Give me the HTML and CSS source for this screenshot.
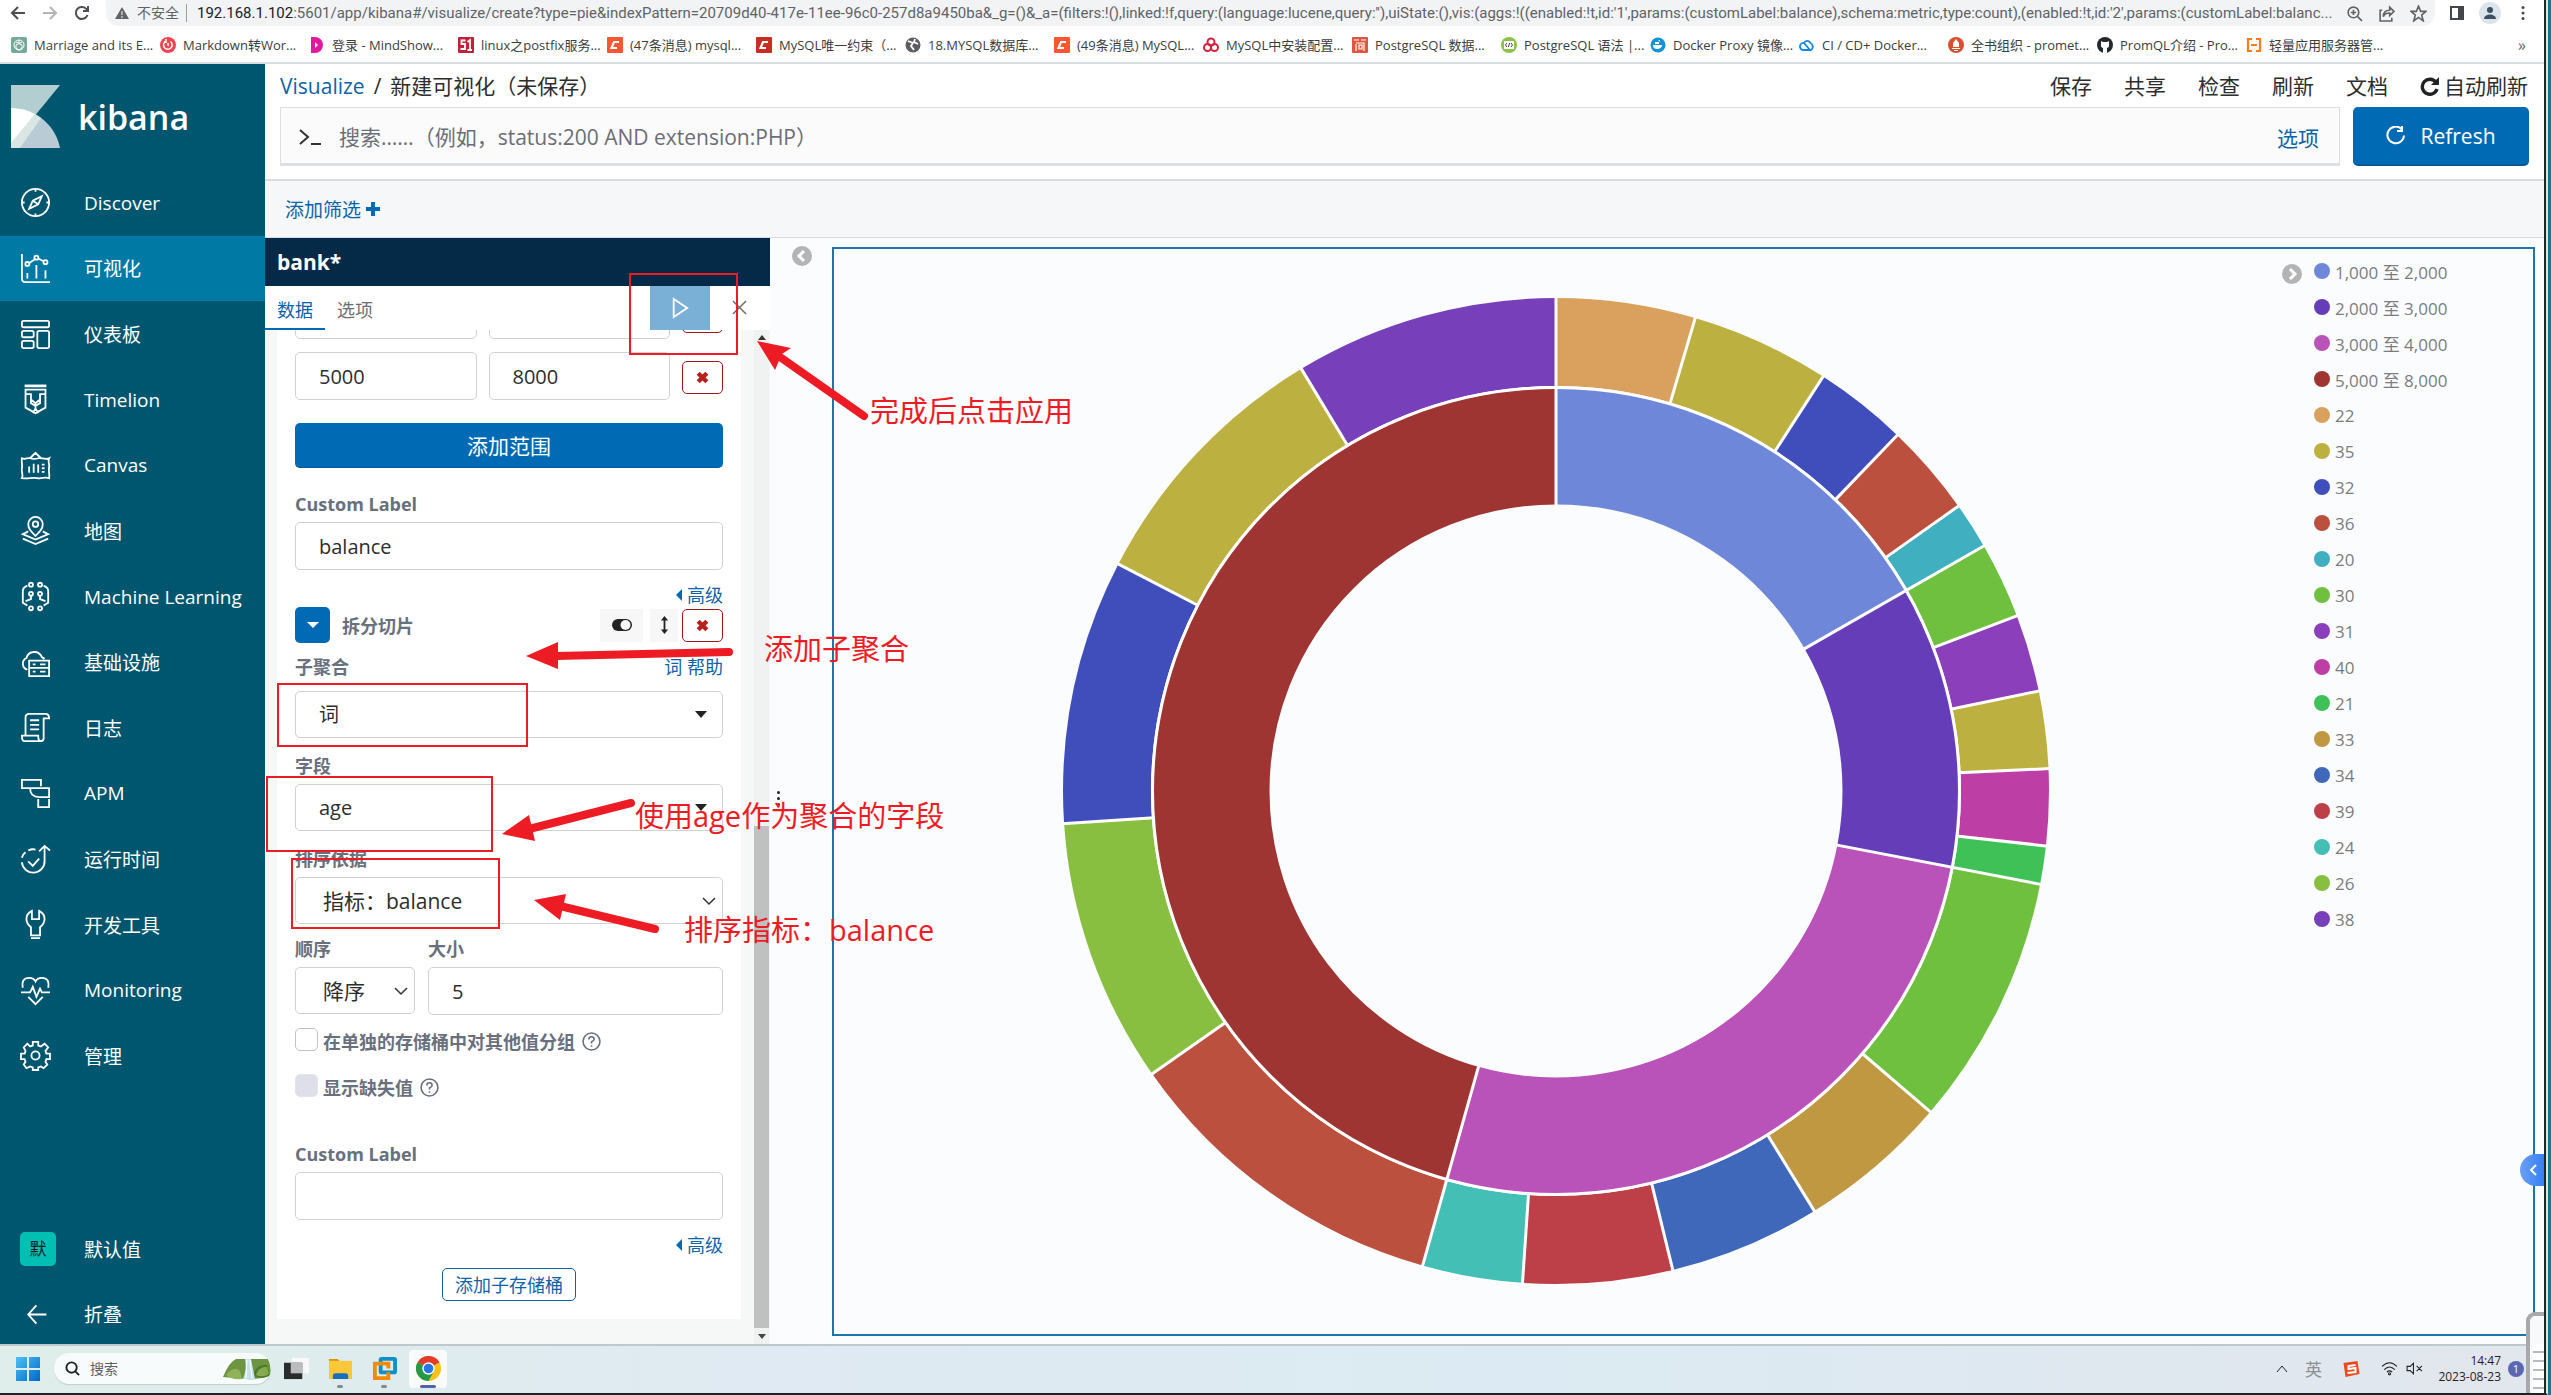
FILE: index.html
```html
<!DOCTYPE html>
<html lang="zh-CN">
<head>
<meta charset="utf-8">
<title>新建可视化 - Kibana</title>
<link rel="stylesheet" href="styles.css">
</head>
<body>
<div class="screen">
<header class="browser">
  <div class="toolbar">
    <button class="tool" aria-label="后退"><svg viewBox="0 0 16 16"><path d="M15 8H2M8 2L2 8l6 6"/></svg></button>
    <button class="tool dim" aria-label="前进"><svg viewBox="0 0 16 16"><path d="M1 8h13M8 2l6 6-6 6"/></svg></button>
    <button class="tool" aria-label="重新加载"><svg viewBox="0 0 16 16"><path d="M13.500 10A6 6 0 1 1 12 3.600l2 2M14 1v5H9"/></svg></button>
    <div class="address">
      <svg class="warn" viewBox="0 0 14 14"><path d="M7 1l7 12H0z" fill="#5f6368"/><path d="M7 5v4M7 10v2" stroke="#fff" stroke-width="1"/></svg>
      <span class="insecure">不安全</span>
      <span class="url"><b>192.168.1.102</b>:5601/app/kibana#/visualize/create?type=pie&amp;indexPattern=20709d40-417e-11ee-96c0-257d8a9450ba&amp;_g=()&amp;_a=(filters:!(),linked:!f,query:(language:lucene,query:''),uiState:(),vis:(aggs:!((enabled:!t,id:'1',params:(customLabel:balance),schema:metric,type:count),(enabled:!t,id:'2',params:(customLabel:balanc...</span>
      <svg class="addr-icon" viewBox="0 0 16 16"><circle cx="7" cy="7" r="5"/><path d="M11 11l4 4M4.500 7h5M7 4.500v5"/></svg>
      <svg class="addr-icon" viewBox="0 0 16 16"><path d="M4 5H2v10h11v-3M5 11c0-5 3-6 6-6V2l4 4-4 4V7.500c-3 0-5 1-6 3.500z"/></svg>
      <svg class="addr-icon" viewBox="0 0 16 16"><path d="M8 1l2 5h5l-4 3.500L12.500 15 8 11.700 3.500 15 5 9.500 1 6h5z"/></svg>
    </div>
    <svg class="win-icon" viewBox="0 0 16 16"><path d="M2 2h12v12H2z" stroke="#44474a" stroke-width="2"/><path d="M9 2h5v12H9z" fill="#44474a"/></svg>
    <span class="avatar"><svg viewBox="0 0 16 16"><circle cx="8" cy="5" r="3" fill="#3c5064"/><path d="M2 14c0-6 12-6 12 0z" fill="#3c5064"/></svg></span>
    <svg class="win-icon kebab" viewBox="0 0 16 16"><circle cx="8" cy="2.500" r="1.500"/><circle cx="8" cy="8" r="1.500"/><circle cx="8" cy="13.500" r="1.500"/></svg>
  </div>
  <nav class="bookmarks">
    <a href="#"><svg viewBox="0 0 16 16"><rect width="16" height="16" rx="2" fill="#75a99c"/><circle cx="8" cy="8" r="5" fill="none" stroke="#fff"/><path d="M5 5l6 3v3M11 5L5 8v3M8 3v4M5 11l3 2 3-2" stroke="#fff"/></svg>Marriage and its E...</a>
    <a href="#"><svg viewBox="0 0 16 16"><circle cx="8" cy="8" r="8" fill="#f5424f"/><path d="M10.500 4.500A4.300 4.300 0 1 1 6 4M6 2v4M8 6v3" stroke="#fff" stroke-width="1.500" fill="none"/></svg>Markdown转Wor...</a>
    <a href="#"><svg viewBox="0 0 16 16"><path d="M2 0h4a8 8 0 0 1 0 16H2zM6 5v6l3-3z" fill="#e5179d" fill-rule="evenodd"/></svg>登录 - MindShow...</a>
    <a href="#"><svg viewBox="0 0 16 16"><rect width="16" height="16" rx="1" fill="#c5203a"/><path d="M7.500 3.500H3.500V7H7v5H2.500M12 13V3L9.500 5M9.500 13H14" stroke="#fff" stroke-width="1.800" fill="none"/></svg>linux之postfix服务...</a>
    <a href="#"><svg viewBox="0 0 16 16"><rect width="16" height="16" rx="1" fill="#fc5531"/><path d="M12 5H7L4.500 11H10" stroke="#fff" stroke-width="2.200" fill="none"/></svg>(47条消息) mysql...</a>
    <a href="#"><svg viewBox="0 0 16 16"><rect width="16" height="16" rx="1" fill="#ca2c24"/><path d="M12 5H7L4.500 11H10" stroke="#fff" stroke-width="2.200" fill="none"/></svg>MySQL唯一约束（...</a>
    <a href="#"><svg viewBox="0 0 16 16"><circle cx="8" cy="8" r="7.500" fill="#5b5f63"/><path d="M3 4l5 2-2 3 3 4M10 2l-1 3 4 2" stroke="#fff" stroke-width="1.800" fill="none"/></svg>18.MYSQL数据库...</a>
    <a href="#"><svg viewBox="0 0 16 16"><rect width="16" height="16" rx="1" fill="#fc5531"/><path d="M12 5H7L4.500 11H10" stroke="#fff" stroke-width="2.200" fill="none"/></svg>(49条消息) MySQL...</a>
    <a href="#"><svg viewBox="0 0 16 16" fill="none" stroke="#d8203c" stroke-width="2"><circle cx="8" cy="5" r="3.500"/><circle cx="4.500" cy="10.500" r="3.500"/><circle cx="11.500" cy="10.500" r="3.500"/></svg>MySQL中安装配置...</a>
    <a href="#"><svg viewBox="0 0 16 16"><rect width="16" height="16" rx="1" fill="#dd5640"/><path d="M2 3h5M9 3h5M4 7v7M4 6h8v8M7 8h3v4H7z" stroke="#fff" stroke-width="1.200" fill="none"/></svg>PostgreSQL 数据...</a>
    <a href="#"><svg viewBox="0 0 16 16"><circle cx="8" cy="8" r="8" fill="#8bc34a"/><rect x="3" y="4" width="10" height="8" fill="#fff"/><path d="M6 6L4.500 8 6 10M10 6l1.500 2L10 10M8.700 6l-1.400 4" stroke="#444" fill="none"/></svg>PostgreSQL 语法 |...</a>
    <a href="#"><svg viewBox="0 0 16 16"><circle cx="8" cy="8" r="7.500" fill="#1792d6"/><path d="M3 8h9c0 3-3 4-5 4S3 11 3 8M5 5h4v2H5zM8 3h2v2" fill="#fff"/></svg>Docker Proxy 镜像...</a>
    <a href="#"><svg viewBox="0 0 16 16"><path d="M5 6a3.500 3.500 0 0 1 6.500 0A4 4 0 0 1 12 13H4A3.500 3.500 0 0 1 5 6l6 7" stroke="#1685e8" stroke-width="1.800" fill="none"/></svg>CI / CD+ Docker...</a>
    <a href="#"><svg viewBox="0 0 16 16"><circle cx="8" cy="8" r="8" fill="#da4e31"/><path d="M8 2l3 4v4H5V6zM4 11h8v1H4zM6 13h4v1H6z" fill="#fff"/></svg>全书组织 - promet...</a>
    <a href="#"><svg viewBox="0 0 16 16"><circle cx="8" cy="8" r="8" fill="#24292e"/><path d="M4 4l2 1h4l2-1v5c0 3-8 3-8 0zM6 11h4v5H6z" fill="#fff"/></svg>PromQL介绍 - Pro...</a>
    <a href="#"><svg viewBox="0 0 16 16"><path d="M6 2H2v12h4M10 2h4v12h-4M5 8h6" stroke="#ff7a1a" stroke-width="2.200" fill="none"/></svg>轻量应用服务器管...</a>
    <button class="more" aria-label="更多书签">»</button>
  </nav>
</header>

<div class="app">
  <aside class="sidebar">
    <a class="brand" href="#">
      <svg viewBox="0 0 49 63"><path d="M0 0h49L0 60z" fill="#b3ced1"/><path d="M0 23c9 0 17 2 24 6L0 60z" fill="#fff"/><path d="M24 29c13 7 22 19 25 34H0v-2z" fill="#b9ccd6"/><path d="M24 29l6 4L9 63H0v-5z" fill="#d9e6e4"/></svg>
      <span>kibana</span>
    </a>
    <ul class="menu">
      <li><a href="#"><svg viewBox="0 0 32 32"><circle cx="16" cy="16" r="15"/><path d="M16 1v3M16 28v3M1 16h3M28 16h3M23 9l-4 9-10 5 4-9zM13 14l6 4"/></svg>Discover</a></li>
      <li><a class="active" href="#"><svg viewBox="0 0 32 32"><path d="M1 0v27q0 4 4 4h27M7 27v-6M17 27V12M27 27v-9M9 10l6-4M19 5l6 3"/><circle cx="7" cy="11" r="2.200"/><circle cx="17" cy="4" r="2.200"/><circle cx="27" cy="9" r="2.200"/></svg>可视化</a></li>
      <li><a href="#"><svg viewBox="0 0 32 32"><rect x="1" y="1" width="30" height="7" rx="2"/><rect x="1" y="12" width="13" height="7" rx="2"/><rect x="1" y="23" width="13" height="8" rx="2"/><rect x="18" y="12" width="13" height="19" rx="2"/></svg>仪表板</a></li>
      <li><a href="#"><svg viewBox="0 0 32 32"><path d="M4 1h24" stroke-width="3"/><path d="M5 5h22v20l-11 6-11-6zM5 10h6v6l5 4 5-4v-6h6M11 16v4l5 3 5-3v-4M13 31l3-5 3 5M16 20v5"/></svg>Timelion</a></li>
      <li><a href="#"><svg viewBox="0 0 32 32"><path d="M10 8l6-6 6 6M1 8c4 2 6-1 9 0s6 1 9 0 8 2 12 0c-2 4 1 6 0 10s1 8 0 12c-5-2-8 1-13 0s-11 1-17 0c2-4-1-7 0-11s-1-7 0-11zM9 24v-7M14 24V14M19 24v-9M23 15h3M23 19h3M23 23h3"/></svg>Canvas</a></li>
      <li><a href="#"><svg viewBox="0 0 32 32"><path d="M16 22c-5-5-8-8-8-13a8 8 0 0 1 16 0c0 5-3 8-8 13zM8 17l-6 3 14 6 14-6-6-3M2 25l14 6 14-6"/><circle cx="16" cy="9" r="3"/></svg>地图</a></li>
      <li><a href="#"><svg viewBox="0 0 32 32"><circle cx="11" cy="3" r="2.200"/><circle cx="21" cy="3" r="2.200"/><circle cx="11" cy="13" r="2.200"/><circle cx="21" cy="13" r="2.200"/><circle cx="11" cy="29" r="2.200"/><circle cx="21" cy="29" r="2.200"/><path d="M7 4q-5 2-5 6v13l5 3M25 4q5 2 5 6v13l-5 3M11 15v4l-6 2M21 15v4l6 2"/></svg>Machine Learning</a></li>
      <li><a href="#"><svg viewBox="0 0 32 32"><path d="M7 24a7 7 0 0 1-1-13 9 9 0 0 1 17-1l3 2M9 14h22v17H9zM9 22h22M13 18h3M13 26h3M21 18h6M21 26h6"/></svg>基础设施</a></li>
      <li><a href="#"><svg viewBox="0 0 32 32"><path d="M5 24V5q0-4 4-4h18M27 1q4 0 4 5h-6V28q0 3-4 3H4q-3 0-3-6h18q0 6 3 6M10 8h10M10 13h10M10 18h10"/></svg>日志</a></li>
      <li><a href="#"><svg viewBox="0 0 32 32"><path d="M22 8V1H1v9h10M10 10h21v10H20q-10 0-10-10M19 22v9h12v-9"/></svg>APM</a></li>
      <li><a href="#"><svg viewBox="0 0 32 32"><path d="M20 7l6-6 6 5M26 2v15a12.500 12.500 0 0 1-25 2M1 14q1-4 4-6M8 6q4-2 8-1M8 18l5 5 7-8"/></svg>运行时间</a></li>
      <li><a href="#"><svg viewBox="0 0 32 32"><path d="M12 1v9h8V1q6 3 6 9 0 5-5 9v9H11v-9q-5-4-5-9 0-6 6-9zM11 31h10"/></svg>开发工具</a></li>
      <li><a href="#"><svg viewBox="0 0 32 32"><path d="M2 13Q0 2 9 2q5 0 7 4 2-4 7-4 9 0 7 11M0 18h10l3-6 4 11 4-9 2 4h9M8 23l8 8 8-8"/></svg>Monitoring</a></li>
      <li><a href="#"><svg viewBox="0 0 32 32"><path d="M13 1h6v4l3 1 4-3 4 4-3 4 1 3h4v6h-4l-1 3 2 3-4 4-3-2-3 1v3h-6v-3l-3-1-4 2-3-4 2-3-1-3H0v-6h4l1-3-2-4 4-4 3 3 3-1z"/><circle cx="16" cy="16" r="4.500"/></svg>管理</a></li>
    </ul>
    <ul class="menu foot">
      <li><a href="#"><span class="space">默</span>默认值</a></li>
      <li><a href="#"><svg class="fold" viewBox="0 0 32 32"><path d="M28 16H8M17 6L8 16l9 10"/></svg>折叠</a></li>
    </ul>
  </aside>

  <main class="main">
    <div class="topbar">
      <div class="crumbs"><a href="#">Visualize</a><span>/</span><strong>新建可视化（未保存）</strong></div>
      <div class="actions">
        <button>保存</button><button>共享</button><button>检查</button><button>刷新</button><button>文档</button>
        <button class="auto"><svg viewBox="0 0 20 20"><path d="M16 6.500A7.500 7.500 0 1 0 17 13" fill="none" stroke="#222" stroke-width="3.400"/><path d="M19 1v8h-8z" fill="#222"/></svg>自动刷新</button>
      </div>
    </div>
    <div class="query">
      <div class="searchbox">
        <svg viewBox="0 0 24 24"><path d="M2 5l8 7-8 7M13 19h10"/></svg>
        <input type="text" aria-label="搜索" placeholder="搜索……（例如，status:200 AND extension:PHP）">
        <a href="#">选项</a>
      </div>
      <button class="refresh"><svg viewBox="0 0 20 20"><path d="M16 3.500a8.300 8.300 0 1 0 2 6M16 0v5h-5"/></svg>Refresh</button>
    </div>
    <div class="filters"><a href="#">添加筛选<svg viewBox="0 0 16 16"><path d="M8 1v14M1 8h14"/></svg></a></div>

    <div class="work">
      <section class="editor">
        <h2>bank*</h2>
        <div class="tabs">
          <button class="tab on">数据</button><button class="tab">选项</button>
          <button class="apply" aria-label="应用更改"><svg viewBox="0 0 20 24"><path d="M3 2v20L18 12z"/></svg></button>
          <button class="discard" aria-label="放弃更改"><svg viewBox="0 0 16 16"><path d="M1 1l14 14M15 1L1 15"/></svg></button>
        </div>
        <div class="scroller">
          <form class="panel">
            <div class="range scrolled"><input type="text" aria-label="自"><input type="text" aria-label="到"><button type="button" class="del" aria-label="删除范围"></button></div>
            <div class="range"><input type="text" aria-label="自" value="5000"><input type="text" aria-label="到" value="8000"><button type="button" class="del" aria-label="删除范围"><svg viewBox="0 0 12 12"><path d="M2 2l8 8M10 2l-8 8"/></svg></button></div>
            <button type="button" class="primary">添加范围</button>
            <label class="lbl top" for="cl1">Custom Label</label>
            <input type="text" id="cl1" value="balance">
            <a class="adv" href="#"><i></i>高级</a>
            <div class="bucket">
              <button type="button" class="fold-btn" aria-label="折叠存储桶"><i></i></button>
              <span>拆分切片</span>
              <button type="button" class="grey wide" aria-label="禁用"><svg viewBox="0 0 22 14"><rect x="1" y="1" width="20" height="12" rx="6" fill="#222"/><circle cx="14.500" cy="7" r="5" fill="#f7f7f7"/></svg></button>
              <button type="button" class="grey" aria-label="拖动"><svg viewBox="0 0 10 20"><path d="M5 3v14" stroke="#222" stroke-width="2"/><path d="M1 5l4-5 4 5zM1 15l4 5 4-5z" fill="#222"/></svg></button>
              <button type="button" class="del" aria-label="删除"><svg viewBox="0 0 12 12"><path d="M2 2l8 8M10 2l-8 8"/></svg></button>
            </div>
            <div class="lbl-row"><label class="lbl" for="agg">子聚合</label><a href="#">词 帮助</a></div>
            <div class="pick solid"><select id="agg"><option>词</option></select></div>
            <label class="lbl mid" for="field">字段</label>
            <div class="pick solid"><select id="field"><option>age</option></select></div>
            <label class="lbl mid" for="by">排序依据</label>
            <div class="pick"><select id="by"><option>指标：balance</option></select><svg viewBox="0 0 14 10"><path d="M1 2l6 6 6-6"/></svg></div>
            <div class="pair">
              <div><label class="lbl" for="ord">顺序</label><div class="pick"><select id="ord"><option>降序</option></select><svg viewBox="0 0 14 10"><path d="M1 2l6 6 6-6"/></svg></div></div>
              <div><label class="lbl" for="size">大小</label><input type="text" id="size" value="5"></div>
            </div>
            <div class="check"><input type="checkbox" id="other"><label for="other">在单独的存储桶中对其他值分组</label><svg viewBox="0 0 18 18"><circle cx="9" cy="9" r="8"/><path d="M6.500 7q0-2.500 2.500-2.500T11.500 7Q11.500 8 9 9.500V11M9 12.500V14"/></svg></div>
            <div class="check"><input type="checkbox" id="missing" disabled><label for="missing">显示缺失值</label><svg viewBox="0 0 18 18"><circle cx="9" cy="9" r="8"/><path d="M6.500 7q0-2.500 2.500-2.500T11.500 7Q11.500 8 9 9.500V11M9 12.500V14"/></svg></div>
            <label class="lbl last" for="cl2">Custom Label</label>
            <input type="text" id="cl2">
            <a class="adv" href="#"><i></i>高级</a>
            <button type="button" class="outline">添加子存储桶</button>
          </form>
          <div class="track" aria-hidden="true"><i class="up"></i><div class="thumb"></div><i class="down"></i></div>
        </div>
      </section>
      <div class="gutter">
        <button class="collapse" aria-label="折叠编辑器"><svg viewBox="0 0 20 20"><circle cx="10" cy="10" r="10"/><path d="M12 5l-5 5 5 5"/></svg></button>
        <span class="grip"><i></i><i></i><i></i></span>
      </div>
      <section class="vis">
        <svg class="pie" viewBox="-495 -495 990 990" role="img" aria-label="环形图">
          <g class="ring outer" transform="rotate(-90)">
            <circle r="449" pathLength="360" stroke="#daa05d" stroke-dasharray="16.400 360"/>
            <circle r="449" pathLength="360" stroke="#bcb041" stroke-dasharray="16.400 360" stroke-dashoffset="-16.400"/>
            <circle r="449" pathLength="360" stroke="#3f4ebb" stroke-dasharray="11 360" stroke-dashoffset="-32.800"/>
            <circle r="449" pathLength="360" stroke="#bc503f" stroke-dasharray="10.900 360" stroke-dashoffset="-43.800"/>
            <circle r="449" pathLength="360" stroke="#40afbf" stroke-dasharray="5.500 360" stroke-dashoffset="-54.700"/>
            <circle r="449" pathLength="360" stroke="#70c040" stroke-dasharray="9 360" stroke-dashoffset="-60.200"/>
            <circle r="449" pathLength="360" stroke="#8c3fba" stroke-dasharray="9.100 360" stroke-dashoffset="-69.200"/>
            <circle r="449" pathLength="360" stroke="#bcb041" stroke-dasharray="9.100 360" stroke-dashoffset="-78.300"/>
            <circle r="449" pathLength="360" stroke="#bd3fa5" stroke-dasharray="9 360" stroke-dashoffset="-87.400"/>
            <circle r="449" pathLength="360" stroke="#40c158" stroke-dasharray="4.500 360" stroke-dashoffset="-96.400"/>
            <circle r="449" pathLength="360" stroke="#70c040" stroke-dasharray="29.700 360" stroke-dashoffset="-100.900"/>
            <circle r="449" pathLength="360" stroke="#bf9841" stroke-dasharray="17.800 360" stroke-dashoffset="-130.600"/>
            <circle r="449" pathLength="360" stroke="#3f68bb" stroke-dasharray="17.900 360" stroke-dashoffset="-148.400"/>
            <circle r="449" pathLength="360" stroke="#bd3f47" stroke-dasharray="17.600 360" stroke-dashoffset="-166.300"/>
            <circle r="449" pathLength="360" stroke="#43bfb6" stroke-dasharray="11.800 360" stroke-dashoffset="-183.900"/>
            <circle r="449" pathLength="360" stroke="#bc503f" stroke-dasharray="39.300 360" stroke-dashoffset="-195.700"/>
            <circle r="449" pathLength="360" stroke="#89bf40" stroke-dasharray="31.200 360" stroke-dashoffset="-235"/>
            <circle r="449" pathLength="360" stroke="#3f4ebb" stroke-dasharray="31.200 360" stroke-dashoffset="-266.200"/>
            <circle r="449" pathLength="360" stroke="#bcb041" stroke-dasharray="31.500 360" stroke-dashoffset="-297.400"/>
            <circle r="449" pathLength="360" stroke="#7740ba" stroke-dasharray="31.100 360" stroke-dashoffset="-328.900"/>
          </g>
          <g class="ring inner" transform="rotate(-90)">
            <circle r="345" pathLength="360" stroke="#6f87d8" stroke-dasharray="60.200 360"/>
            <circle r="345" pathLength="360" stroke="#663db8" stroke-dasharray="40.700 360" stroke-dashoffset="-60.200"/>
            <circle r="345" pathLength="360" stroke="#b952b9" stroke-dasharray="94.800 360" stroke-dashoffset="-100.900"/>
            <circle r="345" pathLength="360" stroke="#9e3533" stroke-dasharray="164.300 360" stroke-dashoffset="-195.700"/>
          </g>
          <g class="cuts">
            <circle r="403.500"/>
            <path d="M0-285V-495"/>
            <path d="M0-403V-495" transform="rotate(16.400)"/><path d="M0-403V-495" transform="rotate(32.800)"/>
            <path d="M0-403V-495" transform="rotate(43.800)"/><path d="M0-403V-495" transform="rotate(54.700)"/>
            <path d="M0-285V-495" transform="rotate(60.200)"/><path d="M0-403V-495" transform="rotate(69.200)"/>
            <path d="M0-403V-495" transform="rotate(78.300)"/><path d="M0-403V-495" transform="rotate(87.400)"/>
            <path d="M0-403V-495" transform="rotate(96.400)"/><path d="M0-285V-495" transform="rotate(100.900)"/>
            <path d="M0-403V-495" transform="rotate(130.600)"/><path d="M0-403V-495" transform="rotate(148.400)"/>
            <path d="M0-403V-495" transform="rotate(166.300)"/><path d="M0-403V-495" transform="rotate(183.900)"/>
            <path d="M0-285V-495" transform="rotate(195.700)"/><path d="M0-403V-495" transform="rotate(235)"/>
            <path d="M0-403V-495" transform="rotate(266.200)"/><path d="M0-403V-495" transform="rotate(297.400)"/>
            <path d="M0-403V-495" transform="rotate(328.900)"/>
          </g>
        </svg>
        <div class="legend">
          <button class="collapse" aria-label="切换图例"><svg viewBox="0 0 20 20"><circle cx="10" cy="10" r="10"/><path d="M8 5l5 5-5 5"/></svg></button>
          <ul>
            <li><i style="background:#6f87d8"></i>1,000 至 2,000</li>
            <li><i style="background:#663db8"></i>2,000 至 3,000</li>
            <li><i style="background:#b952b9"></i>3,000 至 4,000</li>
            <li><i style="background:#9e3533"></i>5,000 至 8,000</li>
            <li><i style="background:#daa05d"></i>22</li>
            <li><i style="background:#bcb041"></i>35</li>
            <li><i style="background:#3f4ebb"></i>32</li>
            <li><i style="background:#bc503f"></i>36</li>
            <li><i style="background:#40afbf"></i>20</li>
            <li><i style="background:#70c040"></i>30</li>
            <li><i style="background:#8c3fba"></i>31</li>
            <li><i style="background:#bd3fa5"></i>40</li>
            <li><i style="background:#40c158"></i>21</li>
            <li><i style="background:#bf9841"></i>33</li>
            <li><i style="background:#3f68bb"></i>34</li>
            <li><i style="background:#bd3f47"></i>39</li>
            <li><i style="background:#43bfb6"></i>24</li>
            <li><i style="background:#89bf40"></i>26</li>
            <li><i style="background:#7740ba"></i>38</li>
          </ul>
        </div>
      </section>
    </div>
  </main>
</div>

<footer class="taskbar">
  <button class="start" aria-label="开始"><svg viewBox="0 0 24 24"><defs><linearGradient id="w" x2="1" y2="1"><stop stop-color="#4cc2f5"/><stop offset="1" stop-color="#0067c7"/></linearGradient></defs><path d="M0 0h11v11H0zM13 0h11v11H13zM0 13h11v11H0zM13 13h11v11H13z" fill="url(#w)"/></svg></button>
  <label class="find"><svg viewBox="0 0 16 16"><circle cx="7" cy="7" r="5.500"/><path d="M11 11l4 4"/></svg><input type="text" placeholder="搜索" aria-label="搜索">
    <svg class="falls" viewBox="0 0 48 22"><path d="M0 19Q6 4 13 1h32q4 8 2 17-12 4-24 3T0 19z" fill="#6d9440"/><path d="M3 17q8-10 14-4l2 8Q8 22 3 17z" fill="#8fb35a"/><path d="M30 18q2-12 14-11l3 10q-6 5-17 1z" fill="#4d7a2c"/><path d="M33 17q3-9 11-8l2 7q-6 4-13 1z" fill="#86ab4e"/><path d="M22 1h6l4 20H20q4-10 2-20z" fill="#c5e2ee"/><path d="M24 2l-1 18M27 2l2 18" stroke="#fff"/></svg></label>
  <button class="task" aria-label="任务视图"><svg viewBox="0 0 26 26"><rect x="8" y="2" width="18" height="16" fill="#f7f9f9"/><rect x="0" y="7" width="19" height="17" fill="#2b2c2d"/><rect x="7" y="7" width="12" height="11" fill="#b9bdbd"/></svg></button>
  <button class="task open" aria-label="文件资源管理器"><svg viewBox="0 0 26 26"><path d="M1 3h9l3 3H1z" fill="#d9950c"/><path d="M1 5h24v19H1z" fill="#fcc73d"/><path d="M5 24v-3q0-3 3-3h10q3 0 3 3v3z" fill="#1470bd"/></svg></button>
  <button class="task open" aria-label="虚拟机"><svg viewBox="0 0 26 26" stroke-width="4"><rect x="9" y="3" width="15" height="14" rx="1" stroke="#0f90c9"/><path d="M9 8H3v15h14v-6M9 8h8v5" stroke="#ef8c0b"/></svg></button>
  <button class="task current" aria-label="Chrome"><svg viewBox="0 0 24 24"><circle cx="12" cy="12" r="12" fill="#fbc116"/><path d="M12 12L1.600 6A12 12 0 0 1 22.400 6z" fill="#e33b2e"/><path d="M1.600 6A12 12 0 0 0 12 24l5-9-5-3z" fill="#249a48"/><path d="M12 6h10.400l-2-2H9z" fill="#e33b2e"/><circle cx="12" cy="12" r="6" fill="#fff"/><circle cx="12" cy="12" r="4.600" fill="#2a75e6"/></svg></button>
  <div class="tray">
    <svg class="t1" viewBox="0 0 12 12"><path d="M1 9l5-6 5 6"/></svg>
    <span class="ime">英</span>
    <svg class="t2" viewBox="0 0 16 16"><path d="M0 2l14-2 2 13-14 3z" fill="#ea4a1f"/><path d="M12 4L5 5v3l7-1v4l-8 1" stroke="#fff" stroke-width="2" fill="none"/></svg>
    <svg class="t3" viewBox="0 0 16 16"><path d="M1 6q7-7 14 0M3 9q5-5 10 0M5.500 11.500q2.500-2.500 5 0"/><circle cx="8" cy="13" r="1"/></svg>
    <svg class="t3" viewBox="0 0 16 16"><path d="M1 6v4h3l3 3V3L4 6zM10 5.500l5 5M15 5.500l-5 5"/></svg>
    <div class="clock"><span>14:47</span><span>2023-08-23</span></div>
    <span class="count">1</span>
  </div>
</footer>

<button class="side-tab" aria-label="展开"><svg viewBox="0 0 12 16"><path d="M8 3L3 8l5 5"/></svg></button>
<div class="dock"></div>

<div class="notes">
  <svg>
    <g class="boxes">
      <rect x="630" y="274" width="107" height="80"/><rect x="278" y="684" width="249" height="62"/>
      <rect x="267" y="777" width="225" height="74"/><rect x="292" y="859" width="207" height="69"/>
    </g>
    <g class="heads"><path d="M757 341l34 7-9 6-7 16z"/><path d="M526 656l32-14v27z"/><path d="M502 834l27-19 6 26z"/><path d="M534 900l32-6-6 26z"/></g>
    <g class="shafts"><path d="M780 357L864 416"/><path d="M556 656L729 652"/><path d="M529 829L631 803"/><path d="M560 906L655 929"/></g>
  </svg>
  <p class="n1">完成后点击应用</p>
  <p class="n2">添加子聚合</p>
  <p class="n3">使用age作为聚合的字段</p>
  <p class="n4">排序指标：balance</p>
</div>
</div>
</body>
</html>
```
FILE: styles.css
```css
* { box-sizing: border-box; }
body {
  margin: 0;
  font-family: "Open Sans", "Noto Sans CJK SC", sans-serif;
  font-size: 18px;
  color: #2d2d2d;
  background: #027f96;
}
button, input, select { font: inherit; color: inherit; margin: 0; }
button { border: 0; background: none; padding: 0; cursor: pointer; }
a { color: #0f62a6; text-decoration: none; }
ul { list-style: none; margin: 0; padding: 0; }
p, h2 { margin: 0; }
svg { flex: none; fill: none; }

.screen {
  position: relative;
  display: flex;
  flex-direction: column;
  min-height: 100vh;
  margin-right: 3px;
  background: #fff;
  border-right: 2px solid #e4e4e4;
  border-bottom: 2px solid #1c2326;
}
.screen::after {
  content: "";
  position: absolute;
  top: 0;
  right: 0;
  bottom: 0;
  width: 2px;
  background: #22272a;
}

/* browser chrome */
.browser { height: 64px; border-bottom: 2px solid #d9dcde; background: #fff; }
.toolbar { display: flex; align-items: center; height: 26px; padding: 0 15px 0 10px; }
.tool { width: 16px; height: 16px; margin-right: 16px; }
.tool svg { display: block; width: 16px; height: 16px; stroke: #4a4d51; stroke-width: 2; }
.tool.dim svg { stroke: #b3b5b8; }
.address {
  flex: 1;
  display: flex;
  align-items: center;
  height: 26px;
  min-width: 0;
  margin-right: 14px;
  padding: 0 8px 0 9px;
  background: #f1f3f4;
  border-radius: 0 0 13px 13px;
  color: #5f6368;
}
.warn { width: 14px; height: 14px; }
.insecure { flex: none; margin-left: 8px; padding-right: 7px; border-right: 1px solid #9aa0a6; font-size: 14px; line-height: 18px; }
.url { flex: 1; min-width: 0; margin-left: 10px; white-space: nowrap; font-family: Roboto, sans-serif; font-size: 15px; }
.url b { font-weight: 400; color: #202124; }
.addr-icon { width: 17px; height: 17px; margin-left: 15px; stroke: #5f6368; stroke-width: 1.500; }
.url + .addr-icon { margin-left: 0; }
.win-icon { width: 16px; height: 16px; }
.kebab { fill: #44474a; }
.avatar { display: flex; align-items: center; justify-content: center; width: 22px; height: 22px; margin: 0 14px; border-radius: 50%; background: #dde3ea; }
.avatar svg { width: 16px; height: 16px; }
.bookmarks { display: flex; align-items: center; height: 37px; padding: 0 20px 0 11px; }
.bookmarks a { display: flex; align-items: center; width: 149px; color: #3a3d40; font-size: 13px; white-space: nowrap; }
.bookmarks svg { width: 16px; height: 16px; margin-right: 7px; }
.more { margin-left: auto; font-size: 16px; color: #5f6368; }

/* kibana navigation */
.app { flex: 1; display: flex; }
.sidebar { display: flex; flex-direction: column; width: 265px; background: #01566f; }
.brand { display: flex; align-items: center; gap: 18px; height: 106px; padding: 0 0 1px 11px; color: #fff; }
.brand svg { width: 49px; height: 63px; }
.brand span { font-size: 34px; font-weight: 600; line-height: 50px; }
.menu { flex: 14; display: flex; flex-direction: column; }
.menu.foot { flex: 2; margin: 127px 0 -3px; }
.menu li { flex: 1; display: flex; }
.menu a { flex: 1; display: flex; align-items: center; gap: 33px; padding-left: 20px; color: #fff; font-size: 19px; }
.menu svg { width: 31px; height: 31px; padding: 1px; overflow: visible; stroke: #fff; stroke-width: 2; }
.menu .active { background: #0079a5; }
.space { width: 36px; height: 34px; margin-right: -5px; border-radius: 5px; background: #01bfb3; color: #10202a; font-size: 17px; line-height: 34px; text-align: center; }

/* top of the page */
.main { flex: 1; display: flex; flex-direction: column; min-width: 0; margin-right: 2px; background: #fff; }
.topbar { display: flex; justify-content: space-between; height: 43px; padding: 0 16px 0 15px; font-size: 21px; line-height: 44px; }
.crumbs { display: flex; gap: 9px; }
.crumbs strong { font-weight: 400; }
.actions { display: flex; gap: 32px; }
.auto { display: flex; align-items: center; gap: 4px; }
.auto svg { width: 20px; height: 20px; }
.query { display: flex; gap: 13px; height: 72px; padding: 0 15px 13px; }
.searchbox { flex: 1; display: flex; align-items: center; padding: 2px 20px 0 17px; background: #fbfbfb; border: 1px solid #dcdfe1; border-bottom: 3px solid #dde0e2; font-size: 21px; }
.searchbox svg { width: 24px; height: 24px; margin-right: 17px; stroke: #333; stroke-width: 2; }
.searchbox input { flex: 1; min-width: 0; padding: 0; border: 0; background: none; }
.searchbox input::placeholder { color: #6a6e76; }
.refresh { display: flex; align-items: center; justify-content: center; gap: 14px; width: 176px; border-radius: 5px; background: #006bb4; border-bottom: 2px solid #03599a; color: #fff; font-size: 21px; }
.refresh svg { width: 20px; height: 20px; stroke: #fff; stroke-width: 2; }
.filters { display: flex; align-items: center; height: 59px; padding-left: 20px; background: #f5f7f9; border-top: 2px solid #d9dcdf; border-bottom: 1px solid #d9dcdf; font-size: 19px; }
.filters a { display: flex; align-items: center; gap: 4px; }
.filters svg { width: 16px; height: 16px; stroke: #006bb4; stroke-width: 4; }

/* editor */
.work { flex: 1; display: flex; background: #fbfcfe; }
.editor { display: flex; flex-direction: column; width: 505px; }
.editor h2 { height: 48px; padding-left: 12px; background: #042a48; color: #fff; font-size: 21px; font-weight: 700; line-height: 48px; }
.tabs { display: flex; height: 44px; background: #fff; }
.tab { padding: 4px 12px 0; border-bottom: 2px solid transparent; color: #6a6e76; }
.tab.on { color: #0a62ab; border-color: #006bb4; }
.apply { width: 60px; margin-left: auto; background: #7ab0d6; }
.apply svg { display: block; width: 18px; height: 22px; margin: auto; stroke: #fff; stroke-width: 2; }
.discard { width: 60px; padding-left: 22px; text-align: left; }
.discard svg { width: 15px; height: 15px; stroke: #66686b; stroke-width: 1.500; }
.scroller { flex: 1; display: flex; align-items: flex-start; overflow: hidden; padding-left: 12px; background: #f6f7f7; }
.panel { display: flex; flex-direction: column; width: 464px; padding: 0 18px 18px; background: #fff; }
.panel input[type="text"] { width: 100%; height: 48px; padding: 0 23px; border: 1px solid #cfd1d3; border-radius: 5px; background: #fff; font-size: 20px; }
.range { display: flex; align-items: center; gap: 12px; margin-top: 13px; }
.range.scrolled { margin-top: -39px; }
.range .del { margin-top: 2px; }
.del { flex: none; width: 41px; height: 33px; border: 1px solid #a5161a; border-radius: 5px; background: #fff; }
.del svg { width: 13px; height: 13px; stroke: #b5211b; stroke-width: 4; }
.primary { height: 45px; margin-top: 23px; border-radius: 5px; background: #006bb4; border-bottom: 1px solid #03599a; color: #fff; font-size: 21px; }
.lbl { display: block; color: #69707d; font-size: 18px; font-weight: 700; line-height: 24px; }
.lbl.top { margin: 24px 0 6px; }
.lbl.mid { margin: 16px 0 6px; }
.lbl.last { margin: 40px 0 6px; }
.adv { align-self: flex-end; display: flex; align-items: center; gap: 5px; margin-top: 13px; line-height: 24px; }
.adv i { border: 6px solid transparent; border-left: 0; border-right-color: #006bb4; }
.bucket { display: flex; align-items: center; gap: 4px; height: 36px; color: #69707d; font-weight: 700; }
.bucket span { flex: 1; padding-left: 8px; }
.fold-btn { display: flex; align-items: center; justify-content: center; width: 35px; height: 36px; border-radius: 5px; background: #006bb4; }
.fold-btn i { border: 6px solid transparent; border-bottom: 0; border-top-color: #fff; }
.grey { width: 28px; height: 33px; background: #f7f7f7; }
.grey svg { display: block; height: 18px; margin: auto; }
.grey.wide { width: 43px; margin-right: 3px; }
.grey.wide svg { width: 22px; height: 14px; }
.lbl-row { display: flex; justify-content: space-between; margin: 12px 0; line-height: 24px; }
.pick { position: relative; }
.pick select { display: block; width: 100%; height: 47px; padding: 0 27px; appearance: none; border: 1px solid #cfd1d3; border-radius: 5px; background: #fff; font-size: 21px; }
.pick.solid select { padding: 0 23px; font-size: 20px; }
.pick.solid::after { content: ""; position: absolute; right: 16px; top: 20px; border: 6px solid transparent; border-bottom: 0; border-top: 7px solid #222; }
.pick svg { position: absolute; right: 7px; top: 19px; width: 14px; height: 10px; stroke: #333; stroke-width: 1.500; }
.pair { display: grid; grid-template-columns: 120px 1fr; gap: 13px; margin-top: 13px; }
.pair .lbl { margin-bottom: 6px; }
.check { display: flex; align-items: center; height: 30px; margin-top: 11px; color: #69707d; font-weight: 700; }
.check + .check { margin-top: 16px; }
.check input { appearance: none; width: 23px; height: 23px; margin: 0 5px 4px 0; border: 1px solid #bfc3c8; border-radius: 5px; background: #fff; }
.check input:disabled { background: #dfdfea; border-color: #e4e4ee; }
.check svg { width: 19px; height: 19px; margin-left: 7px; stroke: #69707d; stroke-width: 1.500; }
.outline { align-self: center; width: 134px; height: 33px; margin-top: 11px; border: 1px solid #0a62ab; border-radius: 5px; color: #0f62a6; line-height: 30px; }
.track { align-self: stretch; display: flex; flex-direction: column; align-items: center; width: 15px; margin-left: 13px; padding: 5px 0; background: #f0f1f1; }
.track i { border: 4px solid transparent; }
.track .up { border-top: 0; border-bottom: 5px solid #333; }
.track .down { border-bottom: 0; border-top: 5px solid #444; margin-top: 6px; }
.thumb { width: 15px; height: 502px; margin-top: auto; background: #bfc1c1; }

/* splitter */
.gutter { position: relative; width: 62px; }
.collapse { width: 20px; height: 20px; }
.collapse svg { display: block; width: 20px; height: 20px; }
.collapse circle { fill: #b4b4b4; }
.collapse path { stroke: #fff; stroke-width: 3; }
.gutter .collapse { position: absolute; left: 22px; top: 8px; }
.grip { position: absolute; left: 7px; top: 50%; display: flex; flex-direction: column; gap: 3px; }
.grip i { width: 3px; height: 3px; border-radius: 50%; background: #222; }

/* chart */
.vis { flex: 1; display: flex; min-width: 0; margin: 9px 9px 8px 0; border: 2px solid #1f74a8; background: #fbfcfe; }
.pie { flex: 1; min-width: 0; height: 990px; margin: 47px 4px 0 0; }
.ring circle { fill: none; }
.ring.outer circle { stroke-width: 88; }
.ring.inner circle { stroke-width: 117; }
.cuts circle, .cuts path { fill: none; stroke: #fff; stroke-width: 3; }
.legend { display: flex; gap: 12px; width: 251px; padding-top: 4px; color: #7a7c7f; font-size: 17px; }
.legend .collapse { margin-top: 11px; }
.legend li { display: flex; align-items: center; gap: 5px; height: 36px; }
.legend i { width: 16px; height: 16px; border-radius: 50%; }

/* windows taskbar */
.taskbar { display: flex; align-items: center; height: 49px; padding: 0 22px 2px 16px; border-top: 2px solid #bfc9cd; background: linear-gradient(90deg, #dfeeea, #dfeaf2 30%, #dcebf3 60%, #e2e6ed); }
.start svg { display: block; width: 24px; height: 24px; }
.find { display: flex; align-items: center; width: 217px; height: 31px; margin: 0 13px 0 14px; padding: 0 0 0 11px; overflow: hidden; border-radius: 16px; background: #f8fbfb; box-shadow: 0 1px 1px #c2cccc; }
.find > svg:first-child { width: 15px; height: 15px; stroke: #222; stroke-width: 2; }
.find input { flex: 1; min-width: 0; margin-left: 10px; padding: 0; border: 0; background: none; font-size: 14px; }
.find input::placeholder { color: #5c6064; }
.find .falls { width: 48px; height: 22px; }
.task { position: relative; display: flex; align-items: center; justify-content: center; width: 38px; height: 38px; margin-right: 6px; border-radius: 4px; }
.find + .task { margin-left: -7px; }
.task svg { width: 25px; height: 25px; }
.task.open::after, .task.current::after { content: ""; position: absolute; bottom: 0; width: 6px; height: 3px; border-radius: 2px; background: #858a8d; }
.task.current { background: #f9fbfb; }
.task.current::after { width: 16px; background: #5661ad; }
.tray { display: flex; align-items: center; margin-left: auto; }
.tray svg { stroke: #222; }
.t1 { width: 12px; height: 12px; margin-right: 17px; }
.ime { margin-right: 21px; font-size: 17px; color: #8b9094; }
.tray .t2 { width: 17px; height: 16px; margin-right: 21px; stroke: none; }
.t3 { width: 17px; height: 17px; margin-right: 8px; }
.clock { display: flex; flex-direction: column; align-items: flex-end; width: 70px; margin-right: 7px; font-size: 12px; line-height: 16px; color: #1f1f1f; }
.count { width: 16px; height: 16px; border-radius: 50%; background: #5a68b4; color: #fff; font-size: 11px; line-height: 16px; text-align: center; }

/* floating pieces */
.side-tab { position: absolute; right: 2px; bottom: 207px; width: 24px; height: 32px; border-radius: 16px 0 0 16px; background: linear-gradient(90deg, #6ba0f5, #3580f5); }
.side-tab svg { display: block; width: 12px; height: 16px; margin-left: 8px; stroke: #fff; stroke-width: 2; }
.dock { position: absolute; right: 2px; bottom: 0; width: 18px; height: 81px; border: 4px solid #a7a9ab; border-right: 0; border-bottom: 0; border-radius: 9px 0 0 0; background: repeating-linear-gradient(#fff 0 7px, #b3bbc6 7px 9px) 3px 28px no-repeat, #f8f9fb; }

/* red marks drawn over the page */
.notes { position: absolute; inset: 0; pointer-events: none; color: #ed1c24; font-size: 29px; line-height: 36px; white-space: nowrap; }
.notes svg { position: absolute; width: 100%; height: 100%; }
.boxes { stroke: #ed1c24; stroke-width: 2; }
.heads { fill: #ed1c24; }
.shafts { stroke: #ed1c24; stroke-width: 8; stroke-linecap: round; }
.notes p { position: absolute; }
.n1 { left: 870px; top: 393px; }
.n2 { left: 764px; top: 631px; }
.n3 { left: 635px; top: 798px; }
.n4 { left: 684px; top: 912px; }
```
